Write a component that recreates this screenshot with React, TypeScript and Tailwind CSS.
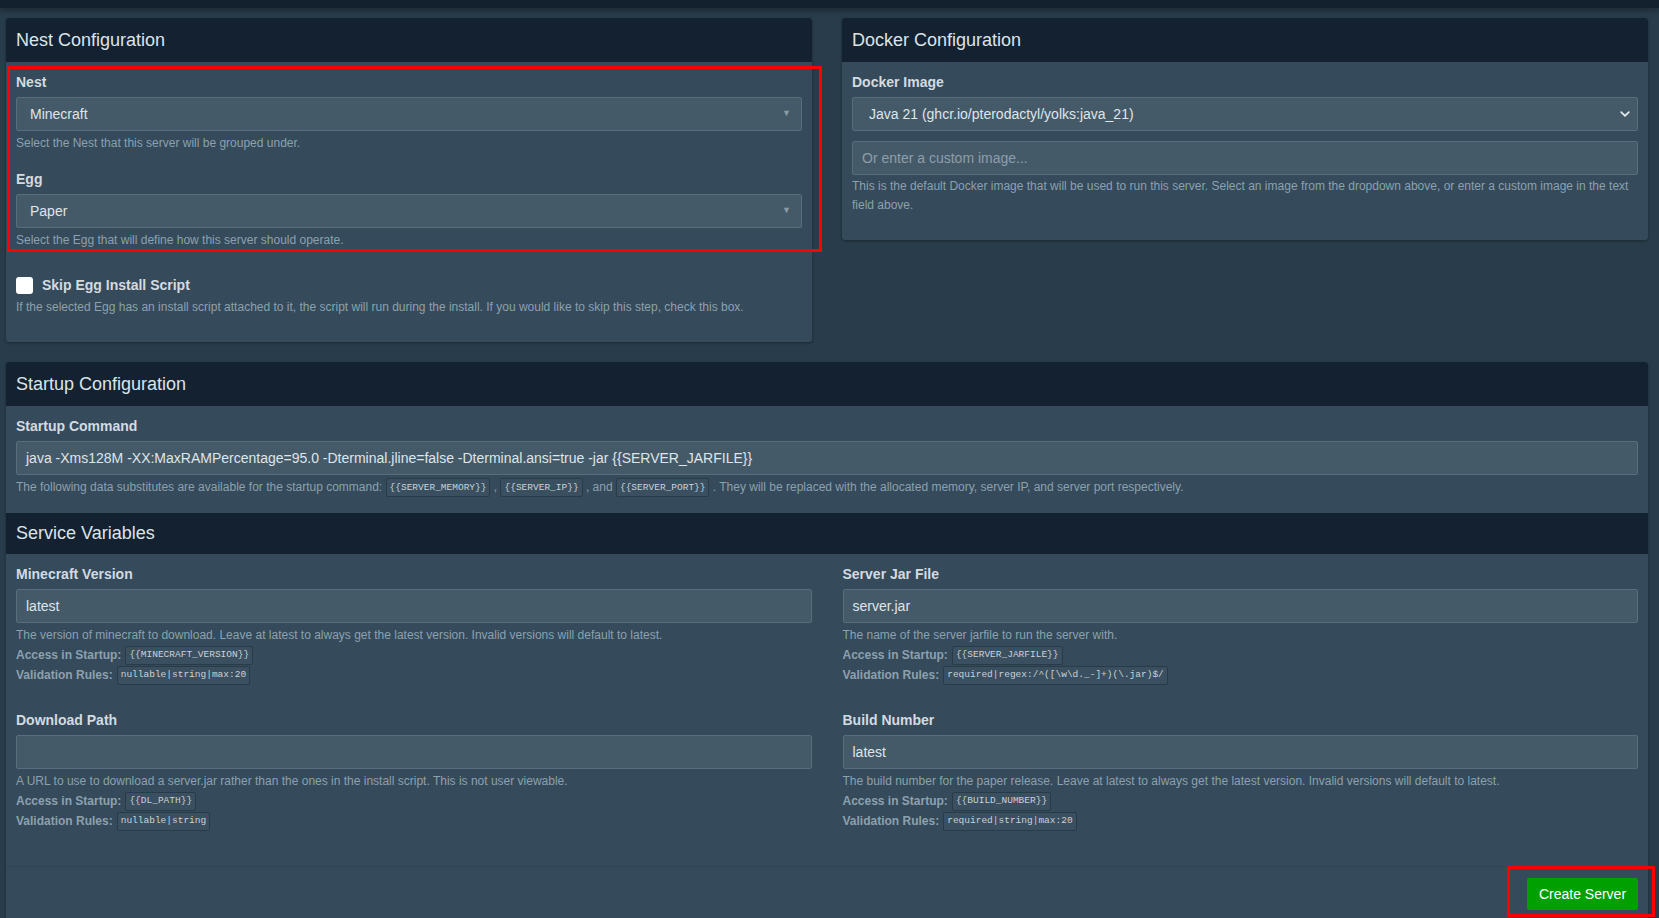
import type { ReactNode } from "react"

type ServiceVariable = {
    name: string
    value: string
    description: string
    envKey: string
    rules: string
}

const SERVICE_VARIABLES: ServiceVariable[] = [
    {
        name: "Minecraft Version",
        value: "latest",
        description: "The version of minecraft to download. Leave at latest to always get the latest version. Invalid versions will default to latest.",
        envKey: "{{MINECRAFT_VERSION}}",
        rules: "nullable|string|max:20",
    },
    {
        name: "Server Jar File",
        value: "server.jar",
        description: "The name of the server jarfile to run the server with.",
        envKey: "{{SERVER_JARFILE}}",
        rules: "required|regex:/^([\\w\\d._-]+)(\\.jar)$/",
    },
    {
        name: "Download Path",
        value: "",
        description: "A URL to use to download a server.jar rather than the ones in the install script. This is not user viewable.",
        envKey: "{{DL_PATH}}",
        rules: "nullable|string",
    },
    {
        name: "Build Number",
        value: "latest",
        description: "The build number for the paper release. Leave at latest to always get the latest version. Invalid versions will default to latest.",
        envKey: "{{BUILD_NUMBER}}",
        rules: "required|string|max:20",
    },
]

const Code = ({ children }: { children: ReactNode }) => (
    <code className="inline-flex items-center h-[19px] px-[3px] bg-[#3a4f5f] border border-[#2a3b48] rounded-[2px] font-['Liberation_Mono',monospace] text-[9.5px] text-[#c9d2d8] align-middle">
        {children}
    </code>
)

const Label = ({ children }: { children: ReactNode }) => (
    <label className="block text-[14px] leading-[20px] font-bold text-[#d3dbe1] mb-[5px]">{children}</label>
)

const Help = ({ children }: { children: ReactNode }) => (
    <p className="mt-[2px] text-[12px] leading-[20px] text-[#8ca1af]">{children}</p>
)

const TextInput = ({ value, placeholder }: { value?: string; placeholder?: string }) => (
    <div className="h-[34px] flex items-center px-[9px] bg-[#455a68] border border-[#596d7b] rounded-[2px] text-[14px]">
        {value ? (
            <span className="text-[#dfe5e9]">{value}</span>
        ) : (
            <span className="text-[#8e9ea9]">{placeholder}</span>
        )}
    </div>
)

const SelectBox = ({ value }: { value: string }) => (
    <div className="h-[34px] flex items-center justify-between pl-[13px] pr-[10px] bg-[#455a68] border border-[#596d7b] rounded-[2px] text-[14px] text-[#dfe5e9]">
        <span>{value}</span>
        <span className="text-[9px] text-[#8a9aa5]">▼</span>
    </div>
)

const BoxHeader = ({ title, className = "h-[44px] rounded-t-[3px]" }: { title: string; className?: string }) => (
    <div className={`flex items-center px-[10px] bg-[#132130] ${className}`}>
        <h3 className="text-[18px] text-[#dce4e9]">{title}</h3>
    </div>
)

const Box = ({ title, children }: { title: string; children: ReactNode }) => (
    <div className="bg-[#354a5a] rounded-[3px] shadow-[0_1px_3px_rgba(0,0,0,0.35)]">
        <BoxHeader title={title} />
        {children}
    </div>
)

const VariableField = ({ variable }: { variable: ServiceVariable }) => (
    <div className="mb-[25px]">
        <Label>{variable.name}</Label>
        <TextInput value={variable.value} />
        <Help>{variable.description}</Help>
        <div className="text-[12px] leading-[20px] text-[#8ca1af]">
            <div className="flex items-center gap-[4px] h-[20px]">
                <span className="font-bold">Access in Startup:</span>
                <Code>{variable.envKey}</Code>
            </div>
            <div className="flex items-center gap-[4px] h-[20px]">
                <span className="font-bold">Validation Rules:</span>
                <Code>{variable.rules}</Code>
            </div>
        </div>
    </div>
)

export default function App() {
    return (
        <div className="relative min-h-screen bg-[#283c4b] font-['Liberation_Sans',Arial,sans-serif]">
            <div className="h-[8px] bg-[#13202e] shadow-[0_2px_6px_rgba(0,0,0,0.35)]" />

            <div className="pl-[6px] pr-[11px] pt-[10px]">
                <div className="grid grid-cols-2 gap-x-[30px] items-start">
                    <Box title="Nest Configuration">
                        <div className="px-[10px] pt-[10px] pb-[25px]">
                            <Label>Nest</Label>
                            <SelectBox value="Minecraft" />
                            <Help>Select the Nest that this server will be grouped under.</Help>

                            <div className="mt-[16px]">
                                <Label>Egg</Label>
                                <SelectBox value="Paper" />
                                <Help>Select the Egg that will define how this server should operate.</Help>
                            </div>

                            <div className="mt-[25px] flex items-center gap-[9px] h-[20px]">
                                <span className="w-[17px] h-[17px] bg-white rounded-[3px]" />
                                <span className="text-[14px] font-bold text-[#d3dbe1]">Skip Egg Install Script</span>
                            </div>
                            <p className="mt-[2px] text-[12px] leading-[20px] text-[#8ca1af]">
                                If the selected Egg has an install script attached to it, the script will run during the install. If you would like to skip this step, check this box.
                            </p>
                        </div>
                    </Box>

                    <Box title="Docker Configuration">
                        <div className="px-[10px] pt-[10px] pb-[25px]">
                            <Label>Docker Image</Label>
                            <div className="h-[34px] flex items-center justify-between pl-[16px] pr-[7px] bg-[#455a68] border border-[#596d7b] rounded-[2px] text-[14px] text-[#dfe5e9]">
                                <span>Java 21 (ghcr.io/pterodactyl/yolks:java_21)</span>
                                <svg width="10" height="6" viewBox="0 0 10 6" fill="none">
                                    <path d="M1.2 1.2 5 4.8l3.8-3.6" stroke="#e3e8ec" strokeWidth="1.8" strokeLinecap="round" strokeLinejoin="round" />
                                </svg>
                            </div>
                            <div className="mt-[10px]">
                                <TextInput placeholder="Or enter a custom image..." />
                            </div>
                            <p className="mt-[2px] text-[12px] leading-[19px] text-[#8ca1af]">
                                This is the default Docker image that will be used to run this server. Select an image from the dropdown above, or enter a custom image in the text field above.
                            </p>
                        </div>
                    </Box>
                </div>

                <div className="mt-[20px] bg-[#354a5a] rounded-[3px] shadow-[0_1px_3px_rgba(0,0,0,0.35)]">
                    <BoxHeader title="Startup Configuration" />
                    <div className="px-[10px] pt-[10px] pb-[16px]">
                        <Label>Startup Command</Label>
                        <TextInput value="java -Xms128M -XX:MaxRAMPercentage=95.0 -Dterminal.jline=false -Dterminal.ansi=true -jar {{SERVER_JARFILE}}" />
                        <Help>
                            The following data substitutes are available for the startup command: <Code>{"{{SERVER_MEMORY}}"}</Code> , <Code>{"{{SERVER_IP}}"}</Code> , and <Code>{"{{SERVER_PORT}}"}</Code> . They will be replaced with the allocated memory, server IP, and server port respectively.
                        </Help>
                    </div>

                    <BoxHeader title="Service Variables" className="h-[41px]" />
                    <div className="px-[10px] pt-[10px] pb-[10px] grid grid-cols-2 gap-x-[31px]">
                        {SERVICE_VARIABLES.map((variable) => (
                            <VariableField key={variable.name} variable={variable} />
                        ))}
                    </div>
                    <div className="border-t border-[#2f4350] px-[10px] pt-[11px] pb-[11px] flex justify-end">
                        <button className="h-[32px] w-[111px] bg-[#00a000] rounded-[2px] text-[14px] text-white">Create Server</button>
                    </div>
                </div>
            </div>

            {/* highlight frames */}
            <div className="absolute left-[7px] top-[66px] w-[815px] h-[186px] border-[3px] border-[#ff0000] pointer-events-none" />
            <div className="absolute left-[1507px] top-[866px] w-[148px] h-[51px] border-[3px] border-[#ff0000] pointer-events-none" />
        </div>
    )
}
